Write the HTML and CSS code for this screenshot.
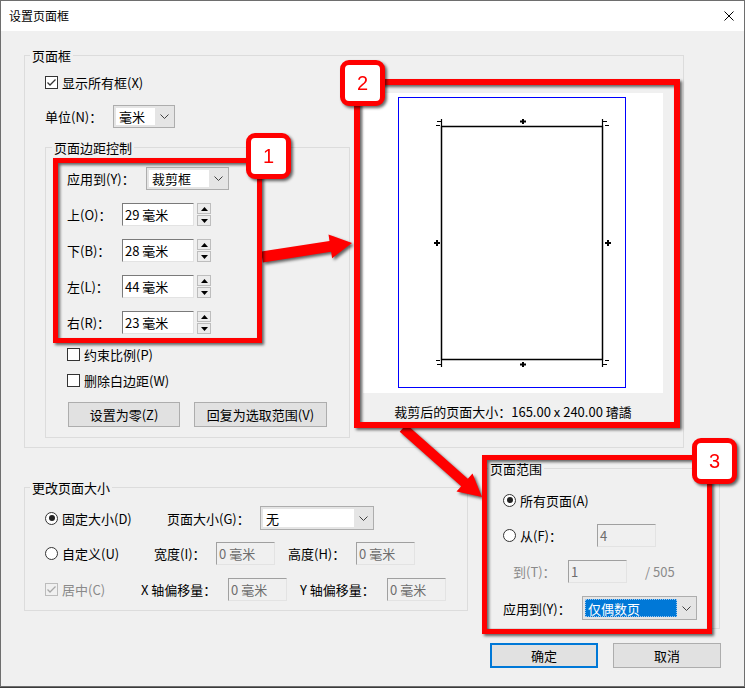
FILE: index.html
```html
<!DOCTYPE html>
<html lang="zh-CN">
<head>
<meta charset="utf-8">
<title>设置页面框</title>
<link rel="stylesheet" href="styles.css">
</head>
<body>
<div class="window">
  <div class="titlebar">
    <span class="title">设置页面框</span>
    <svg class="close" width="10" height="10" viewBox="0 0 10 10"><path d="M0.5 0.5L9.5 9.5M9.5 0.5L0.5 9.5" stroke="#000" stroke-width="1" fill="none"/></svg>
  </div>
  <div class="client">
    <div class="group g-frame">
      <div class="gtitle">页面框</div>
      <div class="frame-body">
        <div class="frame-left">
          <div class="row h18 mt9"><span class="cb"><svg width="11" height="11" viewBox="0 0 11 11"><path d="M1.5 5.5L4 8L9.5 2.5" stroke="#333" stroke-width="1.3" fill="none"/></svg></span><span>显示所有框(X)</span></div>
          <div class="row h23 mt14"><span class="lbl w68">单位(N)：</span><div class="combo w62"><span class="cfield">毫米</span><span class="carrow"><svg width="9" height="5" viewBox="0 0 9 5"><path d="M0.5 0.5L4.5 4.5L8.5 0.5" stroke="#404040" fill="none"/></svg></span></div></div>
          <div class="group g-margin">
            <div class="gtitle t6">页面边距控制</div>
            <div class="margin-body">
              <div class="row h23 mt11"><span class="lbl w79">应用到(Y)：</span><div class="combo w83"><span class="cfield">裁剪框</span><span class="carrow"><svg width="9" height="5" viewBox="0 0 9 5"><path d="M0.5 0.5L4.5 4.5L8.5 0.5" stroke="#404040" fill="none"/></svg></span></div></div>
              <div class="row h23 mt13"><span class="lbl w55">上(O)：</span><span class="edit w72">29 毫米</span><span class="spin"><span class="sb"><svg width="7" height="4" viewBox="0 0 7 4"><path d="M0 4L3.5 0L7 4Z" fill="#000"/></svg></span><span class="sb"><svg width="7" height="4" viewBox="0 0 7 4"><path d="M0 0L3.5 4L7 0Z" fill="#000"/></svg></span></span></div>
              <div class="row h23 mt13"><span class="lbl w55">下(B)：</span><span class="edit w72">28 毫米</span><span class="spin"><span class="sb"><svg width="7" height="4" viewBox="0 0 7 4"><path d="M0 4L3.5 0L7 4Z" fill="#000"/></svg></span><span class="sb"><svg width="7" height="4" viewBox="0 0 7 4"><path d="M0 0L3.5 4L7 0Z" fill="#000"/></svg></span></span></div>
              <div class="row h23 mt13"><span class="lbl w55">左(L)：</span><span class="edit w72">44 毫米</span><span class="spin"><span class="sb"><svg width="7" height="4" viewBox="0 0 7 4"><path d="M0 4L3.5 0L7 4Z" fill="#000"/></svg></span><span class="sb"><svg width="7" height="4" viewBox="0 0 7 4"><path d="M0 0L3.5 4L7 0Z" fill="#000"/></svg></span></span></div>
              <div class="row h23 mt13"><span class="lbl w55">右(R)：</span><span class="edit w72">23 毫米</span><span class="spin"><span class="sb"><svg width="7" height="4" viewBox="0 0 7 4"><path d="M0 4L3.5 0L7 4Z" fill="#000"/></svg></span><span class="sb"><svg width="7" height="4" viewBox="0 0 7 4"><path d="M0 0L3.5 4L7 0Z" fill="#000"/></svg></span></span></div>
              <div class="row h18 mt11"><span class="cb"></span><span>约束比例(P)</span></div>
              <div class="row h18 mt8"><span class="cb"></span><span>删除白边距(W)</span></div>
              <div class="row mt13 btnrow"><span class="btn w112">设置为零(Z)</span><span class="btn w133 ml14">回复为选取范围(V)</span></div>
            </div>
          </div>
        </div>
        <div class="frame-right">
          <div class="preview">
            <svg width="300" height="300" viewBox="0 0 300 300">
              <rect x="35.5" y="4.5" width="227" height="290" fill="none" stroke="#0000ff" stroke-width="1"/>
              <rect x="78.5" y="33.5" width="161" height="233" fill="none" stroke="#000" stroke-width="1.5"/>
              <g stroke="#000" stroke-width="1.2" fill="none">
                <path d="M78.5 26V33M74 28.5H78.5M73 32.5H77"/>
                <path d="M239.5 26V33M239.5 28.5H244M242 32.5H246"/>
                <path d="M78.5 267V274M74 271.5H78.5M73 267.5H77"/>
                <path d="M239.5 267V274M239.5 271.5H244M242 267.5H246"/>
              </g>
              <g stroke="#000" stroke-width="2" fill="none">
                <path d="M157 28.5H163M160 26V31"/>
                <path d="M157 271.5H163M160 269V274"/>
                <path d="M71 150H77M74 147V153"/>
                <path d="M242 150H248M245 147V153"/>
              </g>
            </svg>
          </div>
          <div class="caption">裁剪后的页面大小：165.00 x 240.00 璿譑</div>
        </div>
      </div>
    </div>

    <div class="bottom">
      <div class="group g-resize">
        <div class="gtitle">更改页面大小</div>
        <div class="resize-body">
          <div class="row h24 mt10"><span class="row w122"><span class="rb on"></span><span>固定大小(D)</span></span><span class="lbl w93">页面大小(G)：</span><div class="combo w114 h24"><span class="cfield">无</span><span class="carrow"><svg width="9" height="5" viewBox="0 0 9 5"><path d="M0.5 0.5L4.5 4.5L8.5 0.5" stroke="#404040" fill="none"/></svg></span></div></div>
          <div class="row h23 mt12"><span class="row w109"><span class="rb"></span><span>自定义(U)</span></span><span class="lbl w62">宽度(I)：</span><span class="edit dis w59">0 毫米</span><span class="lbl w68 ml13">高度(H)：</span><span class="edit dis w59">0 毫米</span></div>
          <div class="row h23 mt13"><span class="row w96"><span class="cb cbdis"><svg width="11" height="11" viewBox="0 0 11 11"><path d="M1.5 5.5L4 8L9.5 2.5" stroke="#a8a8a8" stroke-width="1.3" fill="none"/></svg></span><span class="distext">居中(C)</span></span><span class="lbl w87">X 轴偏移量：</span><span class="edit dis w59">0 毫米</span><span class="lbl w87 ml13">Y 轴偏移量：</span><span class="edit dis w59">0 毫米</span></div>
        </div>
      </div>
      <div class="group g-range">
        <div class="gtitle t2">页面范围</div>
        <div class="range-body">
          <div class="row h18 mt14"><span class="rb on"></span><span>所有页面(A)</span></div>
          <div class="row h23 mt15"><span class="row w94"><span class="rb"></span><span>从(F)：</span></span><span class="edit dis w59">4</span></div>
          <div class="row h23 mt13"><span class="lbl distext w55 ml10">到(T)：</span><span class="edit dis w59">1</span><span class="distext ml18">/ 505</span></div>
          <div class="row h24 mt13"><span class="lbl w79">应用到(Y)：</span><div class="combo w115 h24"><span class="cfield sel"><span class="seltext">仅偶数页</span></span><span class="carrow"><svg width="9" height="5" viewBox="0 0 9 5"><path d="M0.5 0.5L4.5 4.5L8.5 0.5" stroke="#404040" fill="none"/></svg></span></div></div>
        </div>
      </div>
    </div>

    <div class="buttons">
      <span class="btn w108 default">确定</span>
      <span class="btn w108">取消</span>
    </div>
  </div>

  <svg class="arrows" width="745" height="688" viewBox="0 0 745 688">
    <g fill="#ff0000">
      <polygon points="262.8,262.4 331.1,251.8 332.1,258.3 352,243 328.5,234.5 329.5,241 261.2,251.6"/>
      <polygon points="399.7,431.8 461.2,486.2 456.5,491.4 482,497 472.5,473.4 467.8,478.7 406.3,424.2"/>
    </g>
  </svg>
  <div class="anno-box a1"></div>
  <div class="anno-box a2"></div>
  <div class="anno-box a3"></div>
  <div class="badge b1">1</div>
  <div class="badge b2">2</div>
  <div class="badge b3">3</div>
</div>
</body>
</html>
```
FILE: styles.css
```css
* { box-sizing: border-box; }
html, body { margin: 0; padding: 0; }
body {
  width: 745px;
  height: 688px;
  overflow: hidden;
  background: #3c3c3c;
  font-family: "Noto Sans CJK SC", "Noto Sans", sans-serif;
  font-size: 13px;
  line-height: 17px;
  color: #000;
}
.window {
  position: relative;
  width: 745px;
  height: 687px;
  border: 1px solid #6e6e6e;
  background: #f0f0f0;
}
.titlebar {
  height: 30px;
  background: #fff;
  display: flex;
  align-items: center;
  justify-content: space-between;
  padding: 0 10px 0 8px;
}
.title { font-size: 12px; line-height: 16px; }
.close { display: block; }

.client { padding: 0 23px; }

.group { border: 1px solid #dcdcdc; }
.gtitle {
  display: table;
  margin: -9px 0 0 5px;
  padding: 0 2px;
  height: 17px;
  line-height: 17px;
  background: #f0f0f0;
}
.gtitle.t6 { margin-left: 6px; }
.gtitle.t2 { margin-left: 2px; }

.g-frame { width: 660px; margin-top: 24px; padding-bottom: 9px; }
.frame-body { display: flex; align-items: flex-start; }
.frame-left { width: 325px; padding-left: 20px; }
.frame-right { margin-left: 13px; margin-top: 29px; width: 300px; }
.preview { width: 300px; height: 300px; background: #fff; }
.preview svg { display: block; }
.caption { margin-top: 10px; text-align: center; white-space: nowrap; }

.g-margin { width: 305px; margin-top: 19px; }
.margin-body { padding: 0 0 10px 21px; }
.btnrow { padding-left: 1px; }

.bottom { display: flex; align-items: flex-start; }
.g-resize { width: 444px; margin-top: 39px; }
.resize-body { padding: 0 0 9px 20px; }
.g-range { width: 235px; margin-top: 20px; margin-left: 17px; }
.range-body { padding: 0 0 8px 17px; }

.buttons { display: flex; justify-content: flex-end; gap: 15px; margin-top: 14px; }

.row { display: flex; align-items: center; white-space: nowrap; }
.h18 { height: 18px; }
.h23 { height: 23px; }
.h24 { height: 24px; }
.mt8 { margin-top: 8px; }
.mt9 { margin-top: 9px; }
.mt10 { margin-top: 10px; }
.mt11 { margin-top: 11px; }
.mt12 { margin-top: 12px; }
.mt13 { margin-top: 13px; }
.mt14 { margin-top: 14px; }
.mt15 { margin-top: 15px; }
.ml10 { margin-left: 10px; }
.ml13 { margin-left: 13px; }
.ml14 { margin-left: 14px; }
.ml18 { margin-left: 18px; }

.lbl { flex: none; display: block; }
.w55 { width: 55px; }
.w59 { width: 59px; }
.w62 { width: 62px; }
.w68 { width: 68px; }
.w72 { width: 72px; }
.w79 { width: 79px; }
.w83 { width: 83px; }
.w87 { width: 87px; }
.w93 { width: 93px; }
.w94 { width: 94px; }
.w96 { width: 96px; }
.w108 { width: 108px; }
.w109 { width: 109px; }
.w112 { width: 112px; }
.w114 { width: 114px; }
.w115 { width: 115px; }
.w122 { width: 122px; }
.w133 { width: 133px; }

.cb {
  flex: none;
  width: 13px;
  height: 13px;
  border: 1px solid #333;
  background: #fff;
  margin-right: 4px;
  display: flex;
  align-items: center;
  justify-content: center;
}
.cb svg { display: block; }
.cb.cbdis { border-color: #bcbcbc; background: #f0f0f0; }

.rb {
  flex: none;
  width: 13px;
  height: 13px;
  border: 1px solid #333;
  border-radius: 50%;
  background: #fff;
  margin-right: 4px;
  display: flex;
  align-items: center;
  justify-content: center;
}
.rb.on::after {
  content: "";
  width: 6px;
  height: 6px;
  border-radius: 50%;
  background: #222;
}

.distext { color: #8a8a8a; }

.edit {
  flex: none;
  height: 23px;
  background: #fff;
  border: 1px solid;
  border-color: #7a7a7a #e3e3e3 #e3e3e3 #7a7a7a;
  padding-left: 2px;
  display: flex;
  align-items: center;
}
.edit.dis { background: #f0f0f0; color: #6d6d6d; border-color: #a0a0a0 #e3e3e3 #e3e3e3 #a0a0a0; }

.spin {
  flex: none;
  width: 14px;
  height: 23px;
  margin-left: 3px;
  display: flex;
  flex-direction: column;
  justify-content: space-between;
}
.sb {
  height: 11px;
  border: 1px solid #bdbdbd;
  background: #ececec;
  display: flex;
  align-items: center;
  justify-content: center;
}
.sb svg { display: block; }

.combo {
  flex: none;
  display: flex;
  height: 23px;
  border: 1px solid #adadad;
  background: #e5e5e5;
  padding: 2px 0 2px 2px;
}
.combo.h24 { height: 24px; }
.cfield {
  flex: 1;
  background: #fff;
  padding-left: 3px;
  display: flex;
  align-items: center;
}
.cfield.sel {
  background: #0078d7;
  color: #fff;
  outline: 1px dotted #9cc7ee;
  outline-offset: -1px;
}
.carrow {
  flex: none;
  width: 19px;
  display: flex;
  align-items: center;
  justify-content: center;
}
.carrow svg { display: block; }

.btn {
  flex: none;
  height: 25px;
  border: 1px solid #adadad;
  background: #e1e1e1;
  display: flex;
  align-items: center;
  justify-content: center;
}
.btn.default { border: 2px solid #0078d7; }

.arrows {
  position: absolute;
  left: -1px;
  top: -1px;
  pointer-events: none;
  filter: drop-shadow(2px 2px 1.5px rgba(0, 0, 0, 0.6));
}
.anno-box {
  position: absolute;
  border: 5px solid #ff0000;
  filter: drop-shadow(2px 2px 1.5px rgba(0, 0, 0, 0.6));
}
.a1 { left: 52px; top: 157px; width: 209px; height: 185px; }
.a2 { left: 353px; top: 78px; width: 326px; height: 349px; border-width: 6px; }
.a3 { left: 481px; top: 454px; width: 230px; height: 179px; }

.badge {
  position: absolute;
  width: 45px;
  height: 46px;
  border: 5px solid #ff0000;
  border-radius: 9px;
  background: #fff;
  color: #ff0000;
  font-family: "Liberation Sans", Arial, sans-serif;
  font-size: 20px;
  line-height: 20px;
  display: flex;
  align-items: center;
  justify-content: center;
  filter: drop-shadow(2px 2px 1.5px rgba(0, 0, 0, 0.6));
}
.b1 { left: 245px; top: 132px; }
.b2 { left: 339px; top: 59px; }
.b3 { left: 691px; top: 437px; }
```
